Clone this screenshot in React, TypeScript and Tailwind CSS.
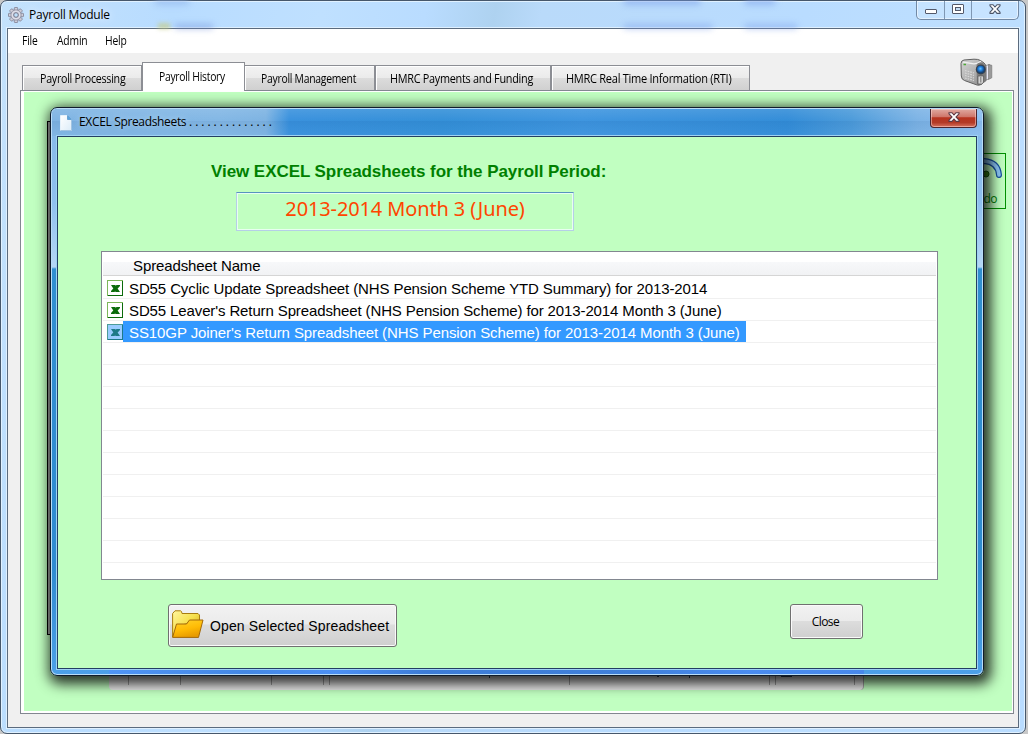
import React from "react";

const rows = [
  { name: "SD55 Cyclic Update Spreadsheet (NHS Pension Scheme YTD Summary) for 2013-2014", tracking: "tracking-[-0.11px]" },
  { name: "SD55 Leaver's Return Spreadsheet (NHS Pension Scheme) for 2013-2014 Month 3 (June)", tracking: "tracking-[-0.12px]" },
  { name: "SS10GP Joiner's Return Spreadsheet (NHS Pension Scheme) for 2013-2014 Month 3 (June)", tracking: "tracking-[-0.085px]" },
];
const SELECTED = 2;

const buttonFace =
  "flex items-center rounded-[3px] border border-[#707070] bg-[linear-gradient(#f2f2f2_0%,#ebebeb_47%,#dddddd_48%,#cfcfcf_100%)] shadow-[inset_0_0_0_1px_#fafafa] text-black";

function Gear() {
  return (
    <svg width="16" height="16" viewBox="0 0 16 16" className="shrink-0">
      {[0, 45, 90, 135, 180, 225, 270, 315].map((a) => (
        <rect key={a} x="6.3" y="0.5" width="3.4" height="3.6" rx="0.6" fill="#cdcdd9" stroke="#7d7d90" strokeWidth="0.8" transform={`rotate(${a} 8 8)`} />
      ))}
      <circle cx="8" cy="8" r="5.2" fill="#c6c6d3" stroke="#8b8b9c" strokeWidth="0.7" />
      <circle cx="8" cy="8" r="3.8" fill="none" stroke="#e3e3ee" strokeWidth="1" />
      <circle cx="8" cy="8" r="2.3" fill="#bfe0fb" stroke="#77778a" strokeWidth="1" />
    </svg>
  );
}

function Sheet() {
  return (
    <svg width="14" height="16" viewBox="0 0 14 16" className="shrink-0">
      <defs>
        <linearGradient id="sheet" x1="0" y1="0" x2="1" y2="1">
          <stop offset="0" stopColor="#ffffff" />
          <stop offset="1" stopColor="#dcecf8" />
        </linearGradient>
      </defs>
      <path d="M1.5 .5h7l4 4v11h-11z" fill="url(#sheet)" stroke="#e4f1fb" />
      <path d="M8.5 .5v4h4z" fill="#5aa5dc" stroke="#3f86c4" strokeWidth=".6" />
      <path d="M12.5 5v10.5h-11" fill="none" stroke="#8fb7dc" strokeWidth=".8" />
    </svg>
  );
}

function Camcorder() {
  return (
    <svg width="34" height="29" viewBox="0 0 34 29">
      <defs>
        <linearGradient id="body" x1="0" y1="0" x2="1" y2="1">
          <stop offset="0" stopColor="#d6d6d6" />
          <stop offset=".5" stopColor="#b2b2b2" />
          <stop offset="1" stopColor="#868686" />
        </linearGradient>
        <radialGradient id="lens" cx=".45" cy=".4">
          <stop offset="0" stopColor="#6cc4fa" />
          <stop offset=".5" stopColor="#1f7ddb" />
          <stop offset="1" stopColor="#17406f" />
        </radialGradient>
      </defs>
      <path d="M24 8l5.500-1.500v14L24 23z" fill="#e9e9f6" stroke="#858585" strokeWidth=".8" />
      <path d="M28.500 6.500l3.300.8v12.500l-3.300 1.700z" fill="#9a9a9a" stroke="#707070" strokeWidth=".6" />
      <path d="M1 5.500Q1 2.500 4 2l10-.8q4-.2 6.500 1.300L24 5q2 1.500 2 4v13.500l-5 4q-2 1-4 .5L4.500 22.500Q1.500 21.500 1.300 18z" fill="url(#body)" stroke="#5f5f5f" strokeWidth="1" />
      <path d="M3 4.200l11 1.600q4-.3 7-2.600" fill="none" stroke="#f0f0f0" strokeWidth="1.200" />
      <path d="M16.500 7q1-3 4.500-2.500 4 .5 5 5v13l-4.500 4h-4.500z" fill="#7b7b7b" />
      <path d="M5 12.500l9 2.500M5 15l9 2.500M5 17.500l9 2.500M5 20l9 2.500" stroke="#d9d9d9" strokeWidth="1.200" strokeDasharray="1.700 1" />
      <circle cx="20.800" cy="11.500" r="5" fill="#3d4249" />
      <circle cx="20.800" cy="11.500" r="4" fill="url(#lens)" />
      <path d="M18 18h5.500v6.500l-2 1.500H18z" fill="#d2d2d2" stroke="#555" strokeWidth=".7" />
      <path d="M20.800 19v5.500" stroke="#777" />
      <path d="M3.500 6.500h2.500" stroke="#4eaa37" strokeWidth="1.500" />
    </svg>
  );
}

function ExcelIcon({ selected }: { selected: boolean }) {
  const c = selected ? "#1c7a88" : "#0b6b0b";
  return (
    <svg width="16" height="16" viewBox="0 0 16 16" className="shrink-0">
      <rect width="16" height="16" fill={selected ? "#4c9c99" : "#7db75a"} />
      <path d="M1 1h15v15H1z" fill={c} />
      <rect x="1" y="1" width="14" height="14" fill={selected ? "#99ccff" : "#ffffff"} />
      <path d="M4 5h4.200L13 12H8.600zM9.500 5H13v1L7.500 12H4v-1zM6.500 7h4v3h-4z" fill={c} />
    </svg>
  );
}

function Folder() {
  return (
    <svg width="32" height="28" viewBox="0 0 32 28" className="shrink-0">
      <defs>
        <linearGradient id="back" x1="0" y1="0" x2="1" y2="1">
          <stop offset="0" stopColor="#fff6a0" />
          <stop offset=".5" stopColor="#f6e04d" />
          <stop offset="1" stopColor="#c99a10" />
        </linearGradient>
        <linearGradient id="front" x1="0" y1="0" x2=".4" y2="1">
          <stop offset="0" stopColor="#ffd52e" />
          <stop offset=".6" stopColor="#ffbb05" />
          <stop offset="1" stopColor="#e89c00" />
        </linearGradient>
      </defs>
      <path d="M.6 27V3.500L3 .8h5.500l1 .7.500 2H26l1.500 1.500V11L5 16z" fill="url(#back)" stroke="#a87d10" />
      <path d="M.6 27.400L4.500 14h10l3-4H31L26.500 27.400z" fill="url(#front)" stroke="#a3690a" />
    </svg>
  );
}

function CloseGlyph({ size }: { size: "lg" | "sm" }) {
  return (
    <svg width="12" height="10" viewBox="0 0 12 10">
      <path d="M1 .7h3L6 3 8 .7h3v1.200L8 5l3 3.200v1.200H8L6 7 4 9.400H1V8.200L4 5 1 1.900z" fill="#fff" stroke={size === "lg" ? "#4b5568" : "#5b3844"} strokeWidth="1.100" />
    </svg>
  );
}

function Tab({ label, className, textClass }: { label: string; className: string; textClass: string }) {
  return (
    <div className={`flex h-[25px] shrink-0 items-center border border-b-0 border-[#8c8e94] bg-[linear-gradient(#f3f3f3_0%,#ebebeb_48%,#dcdcdc_50%,#d0d0d0_100%)] pt-[2px] shadow-[inset_1px_1px_0_#fff] ${className}`}>
      <span className={`origin-left tracking-[-0.3px] whitespace-nowrap ${textClass}`}>{label}</span>
    </div>
  );
}

function Dialog() {
  return (
    <div className="absolute left-[50px] top-[107px] flex h-[569px] w-[934px] flex-col rounded-[7px] border border-[#101c2c] bg-[linear-gradient(#84b8e8_0px,#8fc0ef_95px,#b5d7f5_159px,#318fd0_161px,#2f8bd0_460px,#4da0e8_100%)] px-[6px] pb-[6px] shadow-[inset_0_0_0_1px_#b9dcf6,3px_4px_13px_4px_rgba(0,0,0,0.8)]">
      <div className="-mx-[5px] mt-px flex h-[27px] shrink-0 items-start rounded-t-[5px] bg-[linear-gradient(rgba(255,255,255,0.1),rgba(255,255,255,0)_45%,rgba(0,40,100,0.06)_46%,rgba(255,255,255,0.02)),linear-gradient(90deg,#7fb4e3_0%,#82b7e5_18%,#7db3e2_23%,#3991dd_25.5%,#3490d8_42%,#3e95df_57%,#338dd8_79%,#4c9bda_86%,#7cb3e5_93%,#8ebff0_100%)] pl-[7px]">
        <div className="flex h-full items-center gap-[6px]">
          <Sheet />
          <span className="pb-[2px] font-['Open_Sans',sans-serif] text-[12px] tracking-[-0.34px] whitespace-nowrap text-black [text-shadow:0_0_6px_#c5e0f7]">
            EXCEL Spreadsheets <span className="tracking-[-0.07px]">. . . . . . . . . . . . . .</span>
          </span>
        </div>
        <div className="mr-[5px] ml-auto flex h-[19px] w-[47px] items-center justify-center rounded-b-[4px] border border-t-0 border-[#4b2630] bg-[linear-gradient(#e0aaa1_0%,#ce7468_45%,#b7331f_48%,#b33a27_75%,#d5715e_100%)] pb-[2px] pl-px shadow-[inset_0_0_0_1px_rgba(255,220,215,0.5)]">
          <CloseGlyph size="sm" />
        </div>
      </div>
      <div className="flex min-h-0 flex-1 flex-col border border-[#233f63] bg-[#c1ffc1] shadow-[0_0_0_1px_#9ed2f3]">
        <div className="mt-[25px] ml-[153px] h-[20px] font-['Liberation_Sans',sans-serif] text-[17px] leading-[20px] font-bold tracking-[-0.06px] whitespace-nowrap text-[#008000]">
          View EXCEL Spreadsheets for the Payroll Period:
        </div>
        <div className="mt-[10px] ml-[178px] flex h-[39px] w-[338px] items-center justify-center border border-[#b5cfe7] border-t-[#5794bf] pb-[6px] font-['Noto_Sans',sans-serif] text-[20px] tracking-[-0.13px] whitespace-nowrap text-[#ff4500] shadow-[inset_0_0_0_1px_#e8fff0]">
          2013-2014 Month 3 (June)
        </div>
        <div className="mt-[20px] ml-[43px] flex h-[329px] w-[837px] flex-col overflow-hidden border border-[#828790] bg-white font-['Liberation_Sans',sans-serif] text-[15px] text-black">
          <div className="mx-px mb-px flex h-[24px] shrink-0 items-center border-b border-[#d5d5d5] bg-[linear-gradient(#ffffff_0%,#ffffff_42%,#f7f8fa_44%,#f1f2f4_100%)] pt-[5px] pl-[30px] tracking-[-0.11px]">Spreadsheet Name</div>
          {Array.from({ length: 13 }, (_, i) => (
            <div key={i} className="mx-px flex h-[22px] shrink-0 items-center border-b border-[#f0f0f0] pl-[4px]">
              {i < rows.length && (
                <>
                  <ExcelIcon selected={i === SELECTED} />
                  <span className={`flex h-[21px] items-center pt-[3px] pr-[6px] pl-[6px] whitespace-nowrap ${rows[i].tracking} ${i === SELECTED ? "bg-[#3399ff] text-white" : ""}`}>{rows[i].name}</span>
                </>
              )}
            </div>
          ))}
        </div>
        <div className="mt-[24px] mr-[113px] ml-[110px] flex items-start justify-between">
          <button className={`${buttonFace} h-[43px] w-[229px] gap-[6px] pl-[3px] font-['Liberation_Sans',sans-serif] text-[14px] tracking-[0.13px] whitespace-nowrap`}>
            <span className="pb-[3px]"><Folder /></span>
            <span className="pt-[2px]">Open Selected Spreadsheet</span>
          </button>
          <button className={`${buttonFace} h-[35px] w-[73px] justify-center pr-[2px] font-['Open_Sans',sans-serif] text-[12px] tracking-[-0.6px]`}>Close</button>
        </div>
      </div>
      <div className="absolute bottom-[1px] left-[58px] h-[4px] w-[755px] bg-[linear-gradient(90deg,#5094f5_0%,#4488e4_18%,#4c90f4_30%,#3d7cd6_42%,#4080da_70%,#4a8cf0_85%,#4888ea_100%)]" />
    </div>
  );
}

export default function App() {
  return (
    <div className="relative h-[734px] w-[1028px] overflow-hidden bg-[#c8c8c8]">
      <div className="flex h-[734px] w-[1026px] flex-col rounded-[7px] border border-[#46576b] bg-[linear-gradient(100deg,#c4e2fc_0%,#b8dcff_15%,#bfe0ff_28%,#b9dcff_37%,#aed2f0_43%,#b9dafa_47%,#b9dcff_70%,#bedfff_85%,#b9dcff_100%)] pr-[6px] pb-[5px] pl-[6px] shadow-[inset_0_0_0_1px_#e0f1ff]">
        <div className="relative flex h-[27px] shrink-0 items-center">
          <div className="absolute top-[-4px] left-[148px] h-[8px] w-[34px] bg-[#89aee8]/50 blur-[3px]" />
          <div className="absolute top-[22px] left-[151px] h-[6px] w-[12px] bg-[#c6cd88]/70 blur-[2px]" />
          <div className="absolute top-[23px] left-[168px] h-[5px] w-[38px] bg-[#6f8ed8]/50 blur-[3px]" />
          <div className="absolute top-[-4px] left-[617px] h-[8px] w-[76px] bg-[#789be9]/50 blur-[3px]" />
          <div className="absolute top-[23px] left-[617px] h-[5px] w-[88px] bg-[#789be9]/50 blur-[3px]" />
          <div className="absolute top-[-4px] left-[738px] h-[8px] w-[30px] bg-[#789be9]/50 blur-[3px]" />
          <div className="absolute top-[23px] left-[738px] h-[5px] w-[52px] bg-[#789be9]/50 blur-[3px]" />
          <div className="flex items-center gap-[5px] pl-px">
            <Gear />
            <span className="font-['Open_Sans',sans-serif] text-[12px] tracking-[-0.2px] whitespace-nowrap text-black [text-shadow:0_0_8px_#fff]">Payroll Module</span>
          </div>
          <div className="mr-0 ml-auto flex h-[19px] w-[103px] self-start rounded-b-[5px] border border-t-0 border-[#7289a5] bg-white/15 shadow-[inset_0_0_0_1px_rgba(255,255,255,0.5)]">
            <div className="flex w-[28px] items-end justify-center border-r border-[#7f97b3] pb-[5px]">
              <div className="h-[5px] w-[12px] rounded-[1px] border border-[#54596a] bg-white" />
            </div>
            <div className="flex w-[27px] items-start justify-center border-r border-[#7f97b3] pt-[3px]">
              <div className="flex h-[10px] w-[12px] items-center justify-center rounded-[1px] border border-[#54596a] bg-white">
                <div className="h-[4px] w-[6px] border border-[#54596a] bg-[#c3dcf5]" />
              </div>
            </div>
            <div className="flex flex-1 items-start justify-center pt-[3px]"><CloseGlyph size="lg" /></div>
          </div>
        </div>

        <div className="flex min-h-0 flex-1 flex-col border border-[#5b6b7e] bg-[#f0f0f0] shadow-[0_0_0_1px_#dff0ff]">
          <div className="flex h-[24px] shrink-0 items-center bg-white pl-[14px] font-['Open_Sans',sans-serif] text-[12px] tracking-[-0.2px] text-black">
            <span className="w-[35px] origin-left scale-x-[0.86]">File</span>
            <span className="w-[48px] origin-left scale-x-[0.86]">Admin</span>
            <span className="origin-left scale-x-[0.86]">Help</span>
          </div>
          <div className="flex h-[37px] shrink-0 items-end pl-[14px] font-['Open_Sans',sans-serif] text-[12px] text-black">
            <Tab label="Payroll Processing" className="w-[120px] pl-[17px]" textClass="scale-x-[0.89]" />
            <div className="z-10 -mb-px flex h-[29px] w-[103px] items-center border border-b-0 border-[#8c8e94] bg-white pl-[16px]">
              <span className="origin-left scale-x-[0.86] tracking-[-0.3px] whitespace-nowrap">Payroll History</span>
            </div>
            <Tab label="Payroll Management" className="w-[130px] border-l-0 pl-[16px]" textClass="scale-x-[0.865]" />
            <Tab label="HMRC Payments and Funding" className="w-[176px] pl-[14px]" textClass="scale-x-[0.905]" />
            <Tab label="HMRC Real Time Information (RTI)" className="w-[199px] pl-[14px]" textClass="scale-x-[0.92]" />
            <div className="mr-[24px] ml-auto pb-[3px]"><Camcorder /></div>
          </div>
          <div className="mr-[4px] mb-[13px] ml-[12px] flex min-h-0 flex-1 flex-col border border-[#828790] bg-white pt-px pr-px pb-[2px] pl-[3px]">
            <div className="relative flex-1 overflow-hidden bg-[#c1ffc1]">
              <div className="absolute top-[29px] left-[23px] h-[514px] w-[10px] border border-black bg-[#a8a8a8]" />
              <div className="absolute top-[61px] left-[930px] flex h-[56px] w-[52px] flex-col items-end border border-[#009000] pt-[3px] pr-[2px]">
                <svg width="38" height="24" viewBox="0 0 38 24" className="shrink-0">
                  <path d="M5 17V13Q8 4 19 4Q33 5 34 18" fill="none" stroke="#164f9e" strokeWidth="6" strokeLinecap="round" />
                  <path d="M5 17V13Q8 4 19 4Q33 5 34 18" fill="none" stroke="#8cc6f5" strokeWidth="3.600" strokeLinecap="round" />
                  <circle cx="21" cy="17" r="3" fill="#3d8c10" stroke="#145c0c" />
                </svg>
                <span className="mt-[10px] mr-[6px] font-['Open_Sans',sans-serif] text-[12px] leading-[16px] tracking-[-0.5px] text-[#008000]">Undo</span>
              </div>
              <div className="absolute top-[570px] left-[85px] flex h-[28px] w-[755px] rounded-b-[4px] border-r border-[#a5a5a5] bg-[#e9e9e9] pb-[5px]">
                <div className="w-[20px] border-r border-[#a0a0a0]" />
                <div className="w-[52px] border-r border-[#a0a0a0]" />
                <div className="w-[91px] border-r border-[#a0a0a0]" />
                <div className="w-[52px] border-r border-[#a0a0a0]" />
                <div className="w-[6px] border-r border-[#a0a0a0]" />
                <div className="w-[240px] border-r border-[#a0a0a0]" />
                <div className="w-[200px] border-r border-[#a0a0a0]" />
                <div className="w-[6px] border-r border-[#a0a0a0]" />
                <div className="w-[79px] border-r border-[#a0a0a0]" />
              </div>
            </div>
          </div>
        </div>
      </div>
      <Dialog />
      <svg className="absolute top-[676px] left-[480px]" width="320" height="2" shapeRendering="crispEdges">
        <path d="M9 0h1v2h-1zM177 0h2v1h-2zM209 0h1v2h-1zM301 0h11v1h-11z" fill="#10151c" />
      </svg>
    </div>
  );
}
